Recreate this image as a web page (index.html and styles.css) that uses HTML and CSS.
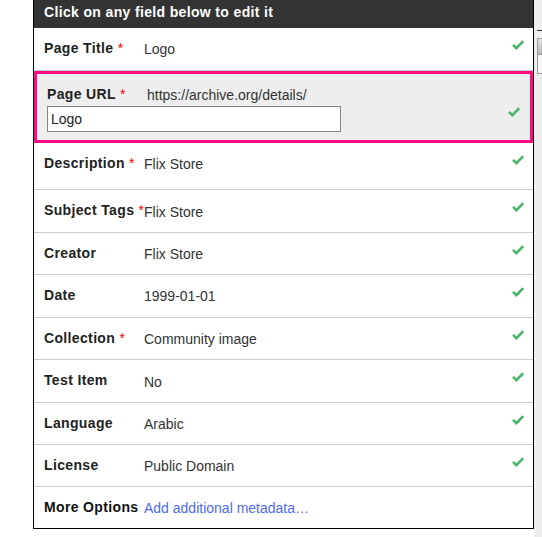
FILE: index.html
```html
<!DOCTYPE html>
<html>
<head>
<meta charset="utf-8">
<link rel="stylesheet" href="styles.css">
</head>
<body>
<div class="page">
  <div class="panel">
    <div class="panel-header">Click on any field below to edit it</div>

    <div class="row row-tall">
      <div class="label">Page Title <span class="req">*</span></div>
      <div class="value">Logo</div>
      <svg class="check" viewBox="0 0 12 10"><path d="M1 4.8 L4.4 8.2 L11.2 1.2"/></svg>
    </div>

    <div class="row-edit">
      <div class="edit-body">
        <div class="edit-top">
          <div class="label">Page URL <span class="req">*</span></div>
          <div class="value">https://archive.org/details/</div>
        </div>
        <input class="url-input" type="text" value="Logo">
      </div>
      <svg class="check check-edit" viewBox="0 0 12 10"><path d="M1 4.8 L4.4 8.2 L11.2 1.2"/></svg>
    </div>

    <div class="row row-desc">
      <div class="label">Description <span class="req">*</span></div>
      <div class="value">Flix Store</div>
      <svg class="check" viewBox="0 0 12 10"><path d="M1 4.8 L4.4 8.2 L11.2 1.2"/></svg>
    </div>

    <div class="row row-tall">
      <div class="label">Subject Tags <span class="req">*</span></div>
      <div class="value value-low">Flix Store</div>
      <svg class="check" viewBox="0 0 12 10"><path d="M1 4.8 L4.4 8.2 L11.2 1.2"/></svg>
    </div>

    <div class="row">
      <div class="label">Creator</div>
      <div class="value">Flix Store</div>
      <svg class="check" viewBox="0 0 12 10"><path d="M1 4.8 L4.4 8.2 L11.2 1.2"/></svg>
    </div>

    <div class="row row-tall">
      <div class="label">Date</div>
      <div class="value">1999-01-01</div>
      <svg class="check" viewBox="0 0 12 10"><path d="M1 4.8 L4.4 8.2 L11.2 1.2"/></svg>
    </div>

    <div class="row">
      <div class="label">Collection <span class="req">*</span></div>
      <div class="value">Community image</div>
      <svg class="check" viewBox="0 0 12 10"><path d="M1 4.8 L4.4 8.2 L11.2 1.2"/></svg>
    </div>

    <div class="row row-tall">
      <div class="label">Test Item</div>
      <div class="value value-low">No</div>
      <svg class="check" viewBox="0 0 12 10"><path d="M1 4.8 L4.4 8.2 L11.2 1.2"/></svg>
    </div>

    <div class="row">
      <div class="label">Language</div>
      <div class="value">Arabic</div>
      <svg class="check" viewBox="0 0 12 10"><path d="M1 4.8 L4.4 8.2 L11.2 1.2"/></svg>
    </div>

    <div class="row">
      <div class="label">License</div>
      <div class="value">Public Domain</div>
      <svg class="check" viewBox="0 0 12 10"><path d="M1 4.8 L4.4 8.2 L11.2 1.2"/></svg>
    </div>

    <div class="row row-last">
      <div class="label label-black">More Options</div>
      <a class="value link" href="#">Add additional metadata…</a>
    </div>
  </div>

  <div class="gutter">
    <div class="gutter-line"></div>
    <div class="gutter-box"><div class="gutter-box-top"></div></div>
  </div>
</div>
</body>
</html>
```

FILE: styles.css
```css
html, body {
  margin: 0;
  padding: 0;
  background: #ffffff;
  font-family: "Liberation Sans", Arial, sans-serif;
  font-size: 14px;
  line-height: 16px;
  overflow: hidden;
}

.page {
  display: flex;
  align-items: flex-start;
  padding-left: 33px;
  height: 537px;
}

.panel {
  width: 501px;
  box-sizing: border-box;
  border-left: 1px solid #000;
  border-right: 1px solid #000;
  border-bottom: 1px solid #000;
  background: #fff;
}

.panel-header {
  height: 28px;
  box-sizing: border-box;
  padding: 4px 10px 0 10px;
  background: #333333;
  color: #ffffff;
  font-weight: bold;
  letter-spacing: 0.35px;
}

.row {
  display: flex;
  align-items: flex-start;
  height: 42px;
  box-sizing: border-box;
  padding: 12px 9px 0 10px;
  border-bottom: 1px solid #cccccc;
}

.row-tall {
  height: 43px;
}

.row-desc {
  height: 47px;
}

.row-last {
  border-bottom: none;
  height: 41px;
}

.label {
  width: 100px;
  flex: 0 0 100px;
  font-weight: bold;
  color: #222222;
  letter-spacing: 0.35px;
  white-space: nowrap;
}

.label-black {
  color: #111111;
}

.req {
  color: #ff0000;
  font-weight: normal;
  letter-spacing: 0;
}

.value {
  flex: 1;
  color: #333333;
  padding-top: 1px;
}

.value-low {
  padding-top: 2px;
}

.link {
  color: #4f6bf2;
  text-decoration: none;
}

.check {
  width: 12px;
  height: 10px;
  flex: 0 0 12px;
  margin-top: 0;
}

.check path {
  fill: none;
  stroke: #4bb669;
  stroke-width: 2.6;
}

.row-edit {
  display: flex;
  align-items: flex-start;
  height: 72px;
  box-sizing: border-box;
  border: 3px solid #ff0a85;
  background: #eeeeee;
  padding: 12px 10px 0 10px;
  margin-top: 0;
}

.edit-body {
  flex: 1;
  display: flex;
  flex-direction: column;
  gap: 3px;
}

.edit-top {
  display: flex;
}

.url-input {
  width: 294px;
  height: 26px;
  box-sizing: border-box;
  margin: 0;
  border: 1px solid #858585;
  background: #ffffff;
  padding: 0 3px;
  font-family: "Liberation Sans", Arial, sans-serif;
  font-size: 14px;
  color: #222222;
  outline: none;
}

.check-edit {
  margin-top: 21px;
}

.gutter {
  width: 8px;
  height: 537px;
  background: #eeeeee;
  overflow: hidden;
  display: flex;
  flex-direction: column;
}

.gutter-line {
  margin: 30px 0 0 3px;
  height: 1px;
  background: #333333;
}

.gutter-box {
  margin: 7px 0 0 3px;
  width: 12px;
  height: 36px;
  box-sizing: border-box;
  border: 1px solid #9a9a9a;
  background: #f6f6f6;
}

.gutter-box-top {
  height: 15px;
  border-bottom: 1px solid #9a9a9a;
  background: linear-gradient(#e2e2e2, #b9b9b9);
}
```
